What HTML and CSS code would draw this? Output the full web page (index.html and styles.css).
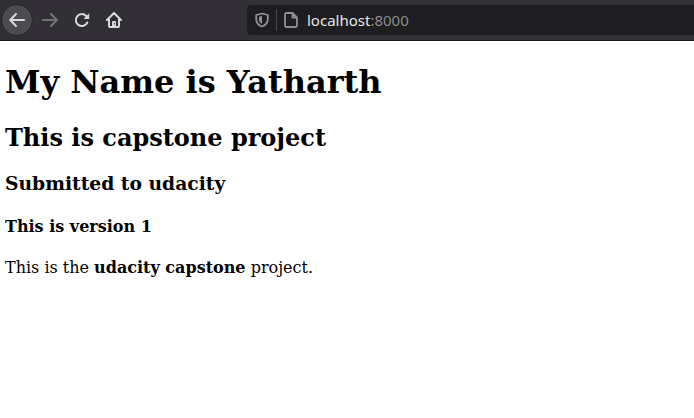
FILE: index.html
```
<!DOCTYPE html>
<html lang="en">
<head>
<meta charset="utf-8">
<title>Capstone</title>
<link rel="stylesheet" href="styles.css">
</head>
<body>
<header class="toolbar">
  <nav class="nav">
    <span class="button back"><svg class="icon" viewBox="0 0 16 16"><path d="M15 8H1.500M7 2L1.200 8 7 14"/></svg></span>
    <span class="button forward"><svg class="icon" viewBox="0 0 16 16"><path d="M1 8h13.500M9 2l5.800 6L9 14"/></svg></span>
    <span class="button"><svg class="icon" viewBox="0 0 16 16"><path d="M13.300 10.500A6 6 0 1 1 12.200 4"/><path class="solid" d="M15.200 1.200v5.300a.5.500 0 0 1-.5.500H9.500l2-2 2.200-2.200z"/></svg></span>
    <span class="button"><svg class="icon" viewBox="0 0 16 16"><path d="M1 8l7-7 7 7M3 7v7q0 1 1 1h8q1 0 1-1V7"/><path class="solid" fill-rule="evenodd" d="M6 14V10q0-1 1-1h2q1 0 1 1v4zM8 11v1.500h1V11z"/></svg></span>
  </nav>
  <div class="address">
    <svg class="small" viewBox="0 0 16 16"><path d="M8 1.500L2.200 3v4c0 4 2.300 6.300 5.800 7.500 3.500-1.200 5.800-3.500 5.800-7.500V3z"/><path class="fill" d="M8 4v7.800C5.800 10.800 5 9.500 5 7V4.700z"/></svg>
    <span class="divider"></span>
    <svg class="small page" viewBox="0 0 16 16"><path d="M2 2.500Q2 1 3.500 1H9.500l4.500 4.500v8q0 1.500-1.500 1.500h-9Q2 15 2 13.500zM9.500 1v4.500h4.500"/></svg>
    <span class="url">localhost<span class="port">:8000</span></span>
  </div>
</header>
<main class="content">
  <h1>My Name is Yatharth</h1>
  <h2>This is capstone project</h2>
  <h3>Submitted to udacity</h3>
  <h4>This is version 1</h4>
  <p>This is the <b>udacity capstone</b> project.</p>
</main>
</body>
</html>
```
FILE: styles.css
```
body { margin: 0; background: #fff; color: #000; font-family: "DejaVu Serif", serif; font-size: 16px; overflow: hidden; }
.toolbar { box-sizing: border-box; height: 41px; display: flex; background: #323036; border-bottom: 1px solid #18171a; }
.nav { display: flex; align-items: center; width: 247px; padding-left: 1px; box-sizing: border-box; }
.button { box-sizing: border-box; width: 32px; height: 32px; display: grid; place-items: center; border-radius: 50%; }
.back { background: #4c4b4f; border: 1px solid #262529; margin-right: 1px; }
.forward { opacity: .4; }
.icon, .small { width: 16px; height: 16px; fill: none; stroke: #d7d9dc; stroke-width: 2; stroke-linecap: round; stroke-linejoin: round; }
.solid { fill: #d7d9dc; stroke: none; }
.address { flex: 1; height: 30px; margin-top: 5px; display: flex; align-items: center; padding-left: 7px; background: #1e1e20; border-radius: 4px 0 0 4px; }
.small { stroke: #929196; stroke-width: 1.800; }
.fill { fill: #929196; stroke: none; }
.divider { width: 1px; height: 22px; margin: 0 6px; background: #4a4a4c; }
.url { margin-left: 8px; font: 15px "Noto Sans", sans-serif; color: #e6e6e8; }
.port { color: #8d8d8f; }
.content { padding: 0 5px; display: flow-root; }
h1 { margin: 22px 0 0; font-size: 32px; line-height: 38px; }
h2 { margin: 23px 0 0; font-size: 24px; line-height: 28px; }
h3 { margin: 20px 0 0; font-size: 18.720px; line-height: 22px; }
h4 { margin: 23px 0 0; font-size: 16px; line-height: 19px; }
p { margin: 22px 0 0; line-height: 19px; }
```
